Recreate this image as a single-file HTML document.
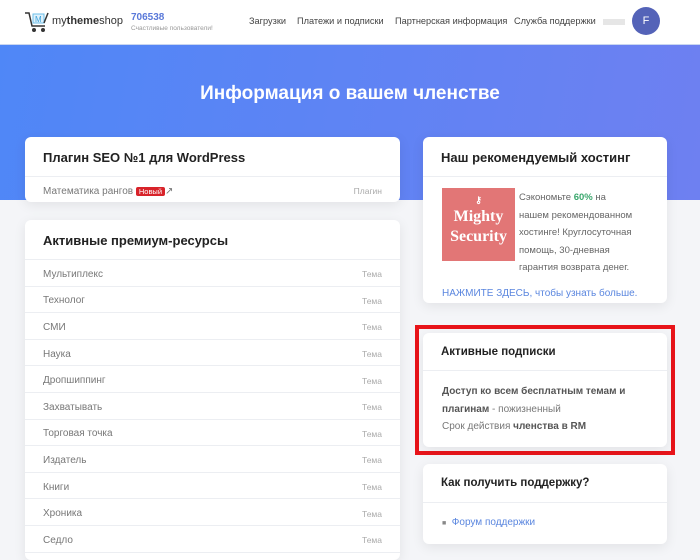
<!DOCTYPE html>
<html><head><meta charset="utf-8"><style>
*{box-sizing:border-box;margin:0;padding:0}
body{width:700px;height:553px;overflow:hidden;background:#f4f5f8;font-family:"Liberation Sans","DejaVu Sans",sans-serif;position:relative}
.nav{position:absolute;left:0;top:0;width:700px;height:45px;background:#fff;border-bottom:1px solid #c9d6f0}
.hero{position:absolute;left:0;top:45px;width:700px;height:155px;background:linear-gradient(100deg,#4f87f7,#6e80f1)}
.hero h1{position:absolute;top:38px;width:100%;text-align:center;color:#fff;font-size:19px;font-weight:bold}
.card{position:absolute;background:#fff;border-radius:6px;box-shadow:0 3px 12px rgba(0,0,0,.08);overflow:hidden}
.card .h{height:40px;border-bottom:1px solid #eceef2;padding:13px 18px 0;font-size:13px;font-weight:bold;color:#222}
.row{height:26.6px;border-bottom:1px solid #eceef2;padding:3px 18px 0;display:flex;justify-content:space-between;align-items:center;font-size:10px;color:#777}
.row span:last-child{color:#aaa;font-size:8.5px}
.navl{position:absolute;top:16px;font-size:9.2px;color:#444;white-space:nowrap}
</style></head><body>
<div class="nav">
<svg style="position:absolute;left:24px;top:11px" width="26" height="22" viewBox="0 0 26 22"><path d="M1 2h4l3 13h13" fill="none" stroke="#333" stroke-width="1.5"/><rect x="9" y="3" width="11" height="9" fill="#dff1fb" stroke="#6cbfe8"/><text x="11" y="11" font-size="8" fill="#3aa0d8" font-family="Liberation Sans">M</text><path d="M20 12l4-10" stroke="#333" stroke-width="1.5"/><circle cx="10" cy="19" r="2" fill="#333"/><circle cx="19" cy="19" r="2" fill="#333"/></svg>
<div style="position:absolute;left:52px;top:15px;font-size:11px;color:#333">my<b>theme</b>shop</div>
<div style="position:absolute;left:131px;top:12px;font-size:10px;font-weight:bold;color:#5a79d9">706538</div>
<div style="position:absolute;left:131px;top:25px;font-size:6.5px;color:#999;white-space:nowrap">Счастливые пользователи!</div>
<div class="navl" style="left:249px">Загрузки</div>
<div class="navl" style="left:297px">Платежи и подписки</div>
<div class="navl" style="left:395px">Партнерская информация</div>
<div class="navl" style="left:514px">Служба поддержки</div>
<div style="position:absolute;left:603px;top:19px;width:22px;height:6px;background:#e6e6e6"></div>
<div style="position:absolute;left:632px;top:7px;width:28px;height:28px;border-radius:50%;background:#5463b8;color:#fff;font-size:11px;text-align:center;line-height:28px">F</div>
</div>
<div class="hero"><h1>Информация о вашем членстве</h1></div>

<div class="card" style="left:25px;top:137px;width:375px;height:65px">
<div class="h">Плагин SEO №1 для WordPress</div>
<div class="row" style="height:25px;border:0"><span>Математика рангов <span style="background:#d8232a;color:#fff;font-size:7.5px;padding:0 3px;border-radius:2px">Новый</span>↗</span><span>Плагин</span></div>
</div>

<div class="card" style="left:25px;top:220px;width:375px;height:340px">
<div class="h">Активные премиум-ресурсы</div>
<div class="row"><span>Мультиплекс</span><span>Тема</span></div>
<div class="row"><span>Технолог</span><span>Тема</span></div>
<div class="row"><span>СМИ</span><span>Тема</span></div>
<div class="row"><span>Наука</span><span>Тема</span></div>
<div class="row"><span>Дропшиппинг</span><span>Тема</span></div>
<div class="row"><span>Захватывать</span><span>Тема</span></div>
<div class="row"><span>Торговая точка</span><span>Тема</span></div>
<div class="row"><span>Издатель</span><span>Тема</span></div>
<div class="row"><span>Книги</span><span>Тема</span></div>
<div class="row"><span>Хроника</span><span>Тема</span></div>
<div class="row"><span>Седло</span><span>Тема</span></div>
</div>

<div class="card" style="left:423px;top:137px;width:244px;height:166px">
<div class="h">Наш рекомендуемый хостинг</div>
<div style="position:absolute;left:19px;top:51px;width:73px;height:73px;background:#e27676;color:#fff;text-align:center;font-family:'Liberation Serif',serif;font-weight:bold;font-size:16px;line-height:20px;padding-top:6px"><div style="font-size:9px;line-height:13px">⚷</div>Mighty<br>Security</div>
<div style="position:absolute;left:96px;top:52px;width:116px;font-size:9.5px;line-height:17.5px;color:#666">Сэкономьте <b style="color:#3aa76d">60%</b> на нашем рекомендованном хостинге! Круглосуточная помощь, 30-дневная гарантия возврата денег.</div>
<div style="position:absolute;left:19px;top:151px;font-size:10px;color:#5a86df">НАЖМИТЕ ЗДЕСЬ, чтобы узнать больше.</div>
</div>

<div style="position:absolute;left:415px;top:325px;width:260px;height:130px;border:4px solid #e8141a"></div>
<div class="card" style="left:423px;top:333px;width:244px;height:114px">
<div class="h" style="height:38px;font-size:11.5px">Активные подписки</div>
<div style="padding:12px 19px;font-size:10px;line-height:17.5px;color:#777"><b style="color:#555">Доступ ко всем бесплатным темам и плагинам</b> - пожизненный<br>Срок действия <b style="color:#555">членства в RM</b></div>
</div>

<div class="card" style="left:423px;top:464px;width:244px;height:80px">
<div class="h" style="height:39px;font-size:11.5px">Как получить поддержку?</div>
<div style="padding:14px 19px;font-size:10px;color:#5a86df"><span style="color:#888;font-size:7px">■</span>&nbsp; Форум поддержки</div>
</div>
</body></html>
